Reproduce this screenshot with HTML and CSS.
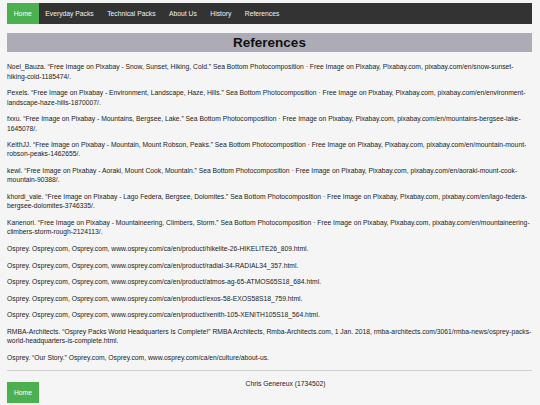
FILE: index.html
```html
<!DOCTYPE html>
<html>
<head>
<meta charset="utf-8">
<link rel="stylesheet" href="styles.css">
</head>
<body>
<nav class="topnav">
  <a class="active" href="#">Home</a>
  <a href="#">Everyday Packs</a>
  <a href="#">Technical Packs</a>
  <a href="#">About Us</a>
  <a href="#">History</a>
  <a href="#">References</a>
</nav>
<h1 class="title">References</h1>
<main class="refs">
<p>Noel_Bauza. “Free Image on Pixabay - Snow, Sunset, Hiking, Cold.” Sea Bottom Photocomposition · Free Image on Pixabay, Pixabay.com, pixabay.com/en/snow-sunset-hiking-cold-1185474/.</p>
<p>Pexels. “Free Image on Pixabay - Environment, Landscape, Haze, Hills.” Sea Bottom Photocomposition · Free Image on Pixabay, Pixabay.com, pixabay.com/en/environment-landscape-haze-hills-1870007/.</p>
<p>fxxu. “Free Image on Pixabay - Mountains, Bergsee, Lake.” Sea Bottom Photocomposition · Free Image on Pixabay, Pixabay.com, pixabay.com/en/mountains-bergsee-lake-1645078/.</p>
<p>KeithJJ. “Free Image on Pixabay - Mountain, Mount Robson, Peaks.” Sea Bottom Photocomposition · Free Image on Pixabay, Pixabay.com, pixabay.com/en/mountain-mount-robson-peaks-1462655/.</p>
<p>kewl. “Free Image on Pixabay - Aoraki, Mount Cook, Mountain.” Sea Bottom Photocomposition · Free Image on Pixabay, Pixabay.com, pixabay.com/en/aoraki-mount-cook-mountain-90388/.</p>
<p>khordi_vale. “Free Image on Pixabay - Lago Federa, Bergsee, Dolomites.” Sea Bottom Photocomposition · Free Image on Pixabay, Pixabay.com, pixabay.com/en/lago-federa-bergsee-dolomites-3746335/.</p>
<p>Kanenori. “Free Image on Pixabay - Mountaineering, Climbers, Storm.” Sea Bottom Photocomposition · Free Image on Pixabay, Pixabay.com, pixabay.com/en/mountaineering-climbers-storm-rough-2124113/.</p>
<p>Osprey. Osprey.com, Osprey.com, www.osprey.com/ca/en/product/hikelite-26-HIKELITE26_809.html.</p>
<p>Osprey. Osprey.com, Osprey.com, www.osprey.com/ca/en/product/radial-34-RADIAL34_357.html.</p>
<p>Osprey. Osprey.com, Osprey.com, www.osprey.com/ca/en/product/atmos-ag-65-ATMOS65S18_684.html.</p>
<p>Osprey. Osprey.com, Osprey.com, www.osprey.com/ca/en/product/exos-58-EXOS58S18_759.html.</p>
<p>Osprey. Osprey.com, Osprey.com, www.osprey.com/ca/en/product/xenith-105-XENITH105S18_564.html.</p>
<p>RMBA-Architects. “Osprey Packs World Headquarters Is Complete!” RMBA Architects, Rmba-Architects.com, 1 Jan. 2018, rmba-architects.com/3061/rmba-news/osprey-packs-world-headquarters-is-complete.html.</p>
<p>Osprey. “Our Story.” Osprey.com, Osprey.com, www.osprey.com/ca/en/culture/about-us.</p>
</main>
<hr class="rule">
<footer class="foot">
  <a class="homebtn" href="#">Home</a>
  <p class="credit">Chris Genereux (1734502)</p>
</footer>
</body>
</html>
```

FILE: styles.css
```css
html, body {
  margin: 0;
  padding: 0;
}
body {
  background: #f5f5f5;
  font-family: "Liberation Sans", Arial, sans-serif;
  font-size: 6.75px;
  color: #222;
  padding: 3px 8px 0 7px;
}
.topnav {
  display: flex;
  background: #333;
  height: 21px;
}
.topnav a {
  display: flex;
  align-items: center;
  padding: 0 6.75px;
  color: #f2f2f2;
  text-decoration: none;
  font-size: 6.75px;
}
.topnav a.active {
  background: #4caf50;
  color: #fff;
}
.title {
  margin: 9px 0 0;
  height: 19px;
  line-height: 19px;
  background: #adacb6;
  text-align: center;
  font-size: 13.5px;
  font-weight: bold;
  color: #111;
}
.refs {
  padding-top: 3px;
}
.refs p {
  margin: 7.4px 0;
  line-height: 9.27px;
}
.rule {
  border: 0;
  border-top: 1px solid #cfcfcf;
  margin: 0;
}
.foot {
  display: flex;
  align-items: flex-start;
  padding-top: 8px;
}
.homebtn {
  margin-top: 3px;
  width: 32px;
  height: 21px;
  display: flex;
  align-items: center;
  justify-content: center;
  background: #4caf50;
  color: #fff;
  text-decoration: none;
  font-size: 6.75px;
}
.credit {
  flex: 1;
  margin: 0;
  text-align: center;
  line-height: 9px;
}
```
